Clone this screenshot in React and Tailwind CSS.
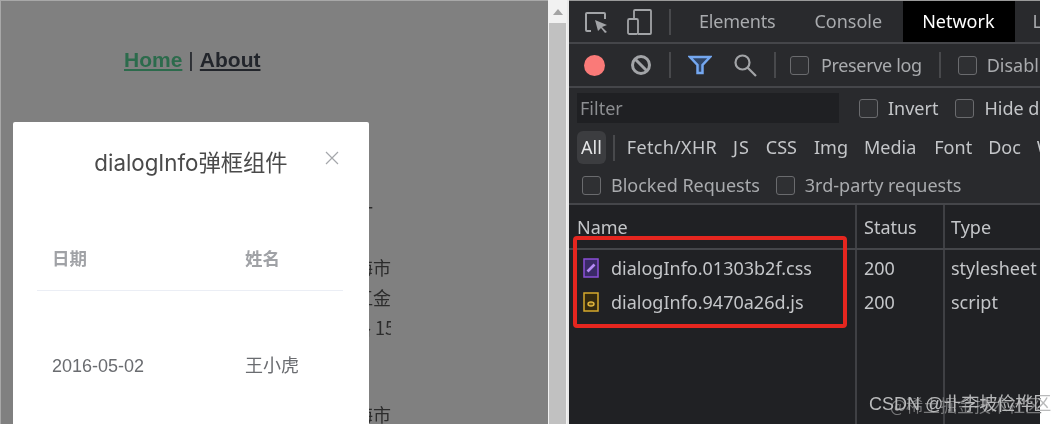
import React from "react";

const sans = "font-['Noto_Sans','Noto_Sans_CJK_SC',sans-serif]";

const Check = ({ label, className = "", labelClass = "" }) => (
  <div className={`flex shrink-0 items-center gap-[10px] ${className}`}>
    <span className="shrink-0 w-[19px] h-[19px] rounded-[3px] border border-[#6a6b6e] bg-[#2f3033]" />
    <span className={`whitespace-nowrap ${labelClass}`}>{label}</span>
  </div>
);

const Sep = ({ h = "h-[26px]" }) => <span className={`block w-[2px] ${h} bg-[#48494c] shrink-0`} />;

const requests = [
  { name: "dialogInfo.01303b2f.css", type: "stylesheet", kind: "css" },
  { name: "dialogInfo.9470a26d.js", type: "script", kind: "js" },
];

const FileIcon = ({ kind }) =>
  kind === "css" ? (
    <svg width="16" height="20" viewBox="0 0 16 20" className="shrink-0">
      <rect x="1" y="1" width="14" height="18" fill="#3a2a66" stroke="#8a4fd8" strokeWidth="1.5" />
      <path d="M4.5 13.5 11.5 6.5" stroke="#b58af5" strokeWidth="2.6" />
    </svg>
  ) : (
    <svg width="16" height="20" viewBox="0 0 16 20" className="shrink-0">
      <rect x="1" y="1" width="14" height="18" fill="#33290f" stroke="#d6a92c" strokeWidth="1.5" />
      <ellipse cx="8" cy="12" rx="3" ry="2" fill="#6b5518" stroke="#e0b53c" strokeWidth="1.4" />
    </svg>
  );

const App = () => {
  return (
    <div className={`relative flex w-[1056px] h-[424px] overflow-hidden bg-white blur-[0.5px] ${sans}`}>
      {/* page under the dialog */}
      <div className="relative w-[548px] h-full bg-[#808080] border-t border-l border-[#a8a8a8] font-['Liberation_Sans',sans-serif]">
        <div className="pt-[45px] pl-[123px] flex text-[21px] leading-7 font-bold text-[#22252b] whitespace-nowrap">
          <span className="text-[#2c6b4c] underline">Home</span>
          <span className="font-normal mx-[6px]">|</span>
          <span className="underline">About</span>
        </div>
        <div className="absolute left-[344px] top-[191px] w-[46px] overflow-hidden flex flex-col text-[18px] leading-[30px] text-[#2c2c2c] text-right font-['Noto_Sans_CJK_SC',sans-serif] whitespace-nowrap">
          <span className="h-[30px] text-left pl-[10px]">一</span>
          <span className="h-[30px]" />
          <span className="h-[30px]">海市</span>
          <span className="h-[30px]">江金</span>
          <span className="h-[30px] text-left pl-[8px]">路 1518 弄</span>
          <span className="h-[30px]" />
          <span className="h-[27px]" />
          <span className="h-[30px]">海市</span>
        </div>
        {/* dialog */}
        <div className="absolute left-[12px] top-[121px] w-[356px] h-[320px] bg-white rounded-t-[2px] pl-6 pr-[26px] pt-[25px]">
          <div className="relative text-center text-[22.3px] leading-8 text-[#4a4a4a] font-['Inter','Noto_Sans_CJK_SC',sans-serif] pl-[2px]">
            dialogInfo弹框组件
            <svg width="14" height="14" viewBox="0 0 14 14" className="absolute right-[4px] top-[4px]">
              <path d="M1 1 13 13M13 1 1 13" stroke="#a5a7ab" strokeWidth="1.2" />
            </svg>
          </div>
          <div className="mt-[55px] flex items-end pb-[20px] h-[57px] border-b border-[#ebeef5] text-[17.5px] font-bold text-[#a0a2a6] leading-6 font-['Noto_Sans_CJK_SC',sans-serif]">
            <span className="w-[208px] pl-[15px]">日期</span>
            <span>姓名</span>
          </div>
          <div className="flex pt-[63px] text-[18px] leading-6 text-[#6a6c70] font-['Liberation_Sans','Noto_Sans_CJK_SC',sans-serif]">
            <span className="w-[208px] pl-[15px]">2016-05-02</span>
            <span>王小虎</span>
          </div>
        </div>
      </div>

      {/* scrollbar */}
      <div className="w-[21px] h-full flex flex-col bg-[#f1f1f1] border-r-2 border-[#e8e8e8]">
        <div className="h-[23px] flex items-center justify-center">
          <span className="w-0 h-0 border-x-[5px] border-x-transparent border-b-[6px] border-b-[#a3a3a3]" />
        </div>
        <div className="flex-1 mx-[1px] bg-[#c1c1c1]" />
      </div>

      {/* devtools */}
      <div className="relative w-[471px] h-full bg-[#292a2d] text-[#a9abae] text-[18px] overflow-hidden">
        <div className="flex items-center h-[44px] border-b-2 border-t border-b-[#45464a] border-t-[#9a9a9a] [&>*]:shrink-0">
          <div className="flex items-center gap-[19px] pl-[15px]">
            <svg width="24" height="24" viewBox="0 0 24 24" fill="none" stroke="#a2a4a7" strokeWidth="2">
              <path d="M7 21H3a1 1 0 0 1-1-1V4a1 1 0 0 1 1-1h17a1 1 0 0 1 1 1v5" />
              <path d="M11 10 23 15l-5 2 5 5-2 1-4-5-3 3Z" fill="#a2a4a7" stroke="none" />
            </svg>
            <svg width="25" height="26" viewBox="0 0 25 26" fill="none" stroke="#a2a4a7" strokeWidth="1.8">
              <path d="M7 9V2a1 1 0 0 1 1-1h15a1 1 0 0 1 1 1v22a1 1 0 0 1-1 1H11" />
              <rect x="1" y="10" width="10" height="15" rx="1.5" />
            </svg>
          </div>
          <span className="ml-[17px] w-[2px] h-[26px] bg-[#48494c]" />
          <span className="ml-[28px] tracking-[-0.2px]">Elements</span>
          <span className="ml-[39px]">Console</span>
          <span className="ml-[21px] h-full flex items-center pl-[19px] pr-[20px] bg-black text-white">Network</span>
          <span className="ml-[18px]">L</span>
        </div>

        <div className="flex items-center h-[44px] border-b-2 border-[#45464a] [&>*]:shrink-0">
          <span className="ml-[15px] w-[21px] h-[21px] rounded-full bg-[#fa7a78]" />
          <svg width="22" height="22" viewBox="0 0 22 22" fill="none" stroke="#a2a4a7" strokeWidth="3" className="ml-[25px]">
            <circle cx="11" cy="11" r="8.5" />
            <path d="M5 5 17 17" />
          </svg>
          <span className="ml-[17px]"><Sep /></span>
          <svg width="24" height="22" viewBox="0 0 24 22" fill="none" stroke="#74a7f0" strokeWidth="2.5" className="ml-[17px]">
            <path d="M2 3h20l-7.5 8v8h-5v-8Z" fill="#2f4566" />
          </svg>
          <svg width="24" height="24" viewBox="0 0 24 24" fill="none" stroke="#a2a4a7" strokeWidth="2.2" className="ml-[21px]">
            <circle cx="9.5" cy="9.5" r="7" />
            <path d="M14.5 14.5 23 23" />
          </svg>
          <span className="ml-[17px]"><Sep /></span>
          <Check label="Preserve log" className="ml-[14px]" labelClass="ml-[2px] tracking-[-0.35px]" />
          <span className="ml-[17px]"><Sep /></span>
          <Check label="Disabl" className="ml-[17px]" />
        </div>

        <div className="flex items-center h-[40px] [&>*]:shrink-0">
          <div className="ml-[8px] w-[262px] h-[30px] pl-[3px] flex items-center bg-[#1f2023] text-[#8c8e91]">Filter</div>
          <Check label="Invert" className="ml-[20px] text-[#c4c6c9]" />
          <Check label="Hide d" className="ml-[17px] text-[#c4c6c9]" />
        </div>

        <div className="flex items-center h-[39px] text-[#c4c6c9] whitespace-nowrap [&>*]:shrink-0">
          <span className="ml-[8px] h-[33px] px-[4px] flex items-center rounded-[6px] bg-[#3c3d40] text-[#e4e5e6]">All</span>
          <span className="ml-[7px]"><Sep /></span>
          <span className="ml-[12px] tracking-[0.3px]">Fetch/XHR</span>
          <span className="ml-[16px] tracking-[1px]">JS</span>
          <span className="ml-[16px]">CSS</span>
          <span className="ml-[17px]">Img</span>
          <span className="ml-[16px]">Media</span>
          <span className="ml-[18px]">Font</span>
          <span className="ml-[16px]">Doc</span>
          <span className="ml-[16px]">W</span>
        </div>

        <div className="flex items-center h-[38px] border-b-2 border-[#45464a]">
          <Check label="Blocked Requests" className="ml-[13px]" />
          <Check label="3rd-party requests" className="ml-[16px]" />
        </div>

        <div className="grid grid-cols-[288px_88px_95px] h-[45px] border-b-2 border-[#45464a] bg-[#202124] text-[#c4c6c9]">
          <span className="pl-[8px] pt-[9px] border-r-2 border-[#3f4044]">Name</span>
          <span className="pl-[7px] pt-[9px] border-r-2 border-[#3f4044]">Status</span>
          <span className="pl-[6px] pt-[9px]">Type</span>
        </div>

        <div className="grid grid-cols-[288px_88px_95px] h-[174px] bg-[#202124] text-[#c4c6c9] content-start">
          <div className="border-r-2 border-[#3f4044] pt-[1px] h-[174px] pl-[14px] flex flex-col">
            {requests.map((r) => (
              <div key={r.name} className="flex items-center gap-[12px] h-[34px] whitespace-nowrap">
                <FileIcon kind={r.kind} />
                <span>{r.name}</span>
              </div>
            ))}
          </div>
          <div className="border-r-2 border-[#3f4044] pt-[1px] h-[174px] pl-[7px]">
            <div className="h-[34px] flex items-center">200</div>
            <div className="h-[34px] flex items-center">200</div>
          </div>
          <div className="pt-[1px] pl-[6px]">
            {requests.map((r) => (
              <div key={r.type} className="h-[34px] flex items-center">{r.type}</div>
            ))}
          </div>
        </div>

        {/* annotation drawn on top of the screenshot */}
        <div className="absolute left-[4px] top-[236px] w-[274px] h-[92px] border-[4px] border-[#e5261f] rounded-[4px]" />
      </div>

      <div className="flex-1 bg-white" />

      {/* two watermarks stacked over the panel edge */}
      <div className="absolute left-[890px] top-[393px] text-[17px] leading-6 text-[#77787a] whitespace-nowrap font-['Noto_Sans_CJK_SC',sans-serif]">
        @稀土掘金技术社区
      </div>
      <div className="absolute left-[869px] top-[392px] text-[18px] leading-6 text-[#b9babb] whitespace-nowrap font-['Liberation_Sans','Noto_Sans_CJK_SC',sans-serif]">
        CSDN @卝李坡俭桦区
      </div>
    </div>
  );
};

export default App;
